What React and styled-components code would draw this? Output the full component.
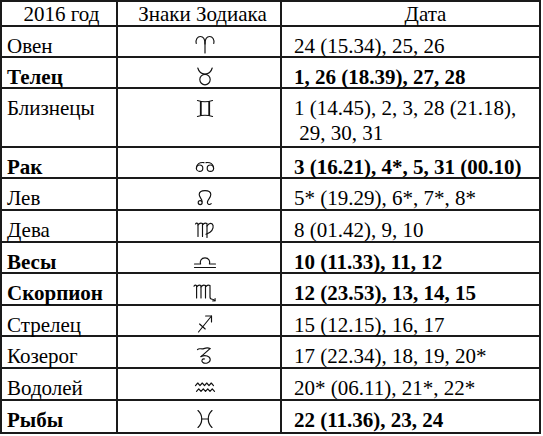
import React from "react";
import styled, { createGlobalStyle } from "styled-components";

const GlobalStyle = createGlobalStyle`
  html, body {
    margin: 0;
    padding: 0;
    background: #fff;
  }
  body {
    font-family: "Liberation Serif", "Times New Roman", serif;
    color: #000;
  }
`;

const Table = styled.table`
  width: 541px;
  table-layout: fixed;
  border-collapse: collapse;
  border: 2px solid #1a1a1a;
  font-size: 21px;
  line-height: 20px;
`;

const Row = styled.tr`
  height: ${(p) => p.$h}px;
`;

const Cell = styled.td`
  border: 2px solid #1a1a1a;
  vertical-align: top;
  padding: ${(p) => (p.$head ? "2px" : "9px")} 0 0 0;
  font-weight: ${(p) => (p.$bold ? 700 : 400)};
  white-space: nowrap;
`;

const NameCell = styled(Cell)`
  padding-left: 5px;
`;

const SignCell = styled(Cell)`
  text-align: center;
  padding-left: ${(p) => (p.$head ? "7px" : "11px")};
  padding-top: ${(p) => (p.$head ? "2px" : "8px")};
`;

const DateCell = styled(Cell)`
  padding-left: ${(p) => (p.$head ? "30px" : "12px")};
  text-align: ${(p) => (p.$head ? "center" : "left")};
`;

const DateLine = styled.div`
  & + & {
    margin-top: 5px;
  }
`;

const Glyph = styled.svg`
  display: block;
  margin: 0 auto;
  width: 24px;
  height: 20px;
  overflow: visible;
  fill: none;
  stroke: #111;
  stroke-width: 1.15;
  stroke-linecap: round;
  stroke-linejoin: round;
`;

const signs = {
  aries: (
    <>
      <path d="M3.2 8.5 C2.4 4.5 4.5 1.5 7.3 1.5 C10.5 1.5 12 5 12 9 V18" />
      <path d="M20.8 8.5 C21.6 4.5 19.5 1.5 16.7 1.5 C13.5 1.5 12 5 12 9" />
    </>
  ),
  taurus: (
    <>
      <path d="M4.8 2 C5.8 5.5 8.2 8 12 8 C15.8 8 18.2 5.5 19.2 2" />
      <circle cx="12" cy="13.6" r="5.2" />
    </>
  ),
  gemini: (
    <>
      <path d="M4.5 3.5 Q12 6 19.5 3.5" />
      <path d="M4.5 19.5 Q12 17 19.5 19.5" />
      <path d="M7.8 5 V18 M16.2 5 V18" strokeWidth="1.8" />
    </>
  ),
  cancer: (
    <>
      <circle cx="6.6" cy="12.2" r="3.2" />
      <path d="M3.4 12.2 C3.4 8 6.6 6 11 6.6" />
      <circle cx="17.4" cy="12.2" r="3.2" />
      <path d="M20.6 12.2 C20.6 8 17.4 6 13 6.6" />
    </>
  ),
  leo: (
    <>
      <circle cx="7.2" cy="15.6" r="2" />
      <path d="M8.9 14.6 C9.6 12 6.2 10.5 6.2 7.6 C6.2 5 8.6 3.6 12 3.6 C15.4 3.6 17.8 5 17.8 7.6 C17.8 11 14.4 12.6 14.4 15.5 C14.4 17.6 16.8 18.1 18.2 16.6" />
    </>
  ),
  virgo: (
    <>
      <path d="M2.5 5 Q3.6 3.4 5 4.6 V17.5" />
      <path d="M5 6 Q7 3 9.5 4.6 V17.5" />
      <path d="M9.5 6 Q11.5 3 14 4.6 V18.5" />
      <path d="M14 7 Q16.5 3.4 19 4.8 C21.2 6.6 20.2 11 17 13.2 C16 13.9 14.6 14.6 13 15.2" />
    </>
  ),
  libra: (
    <>
      <path d="M1.5 16.5 H22.5" />
      <path d="M1.5 13 H7.6 C6.6 10.6 8 6.8 12 6.8 C16 6.8 17.4 10.6 16.4 13 H22.5" />
    </>
  ),
  scorpio: (
    <>
      <path d="M1 4.2 Q2.2 2.6 3.6 3.6 V16" />
      <path d="M3.6 5 Q5.6 2 8 3.6 V16" />
      <path d="M8 5 Q10 2 12.5 3.6 V16" />
      <path d="M12.5 5 Q14.5 2 17 3.6 V15 Q17 17.2 19.2 17.2 Q21 17.2 22 18.8" />
      <path d="M19.8 18.9 L22 18.8 L22.1 16.6" />
    </>
  ),
  sagittarius: (
    <>
      <path d="M5.5 18 L18.5 2" />
      <path d="M12.6 2 H18.5 V7.9" />
      <path d="M6.6 10 L12.2 15" />
    </>
  ),
  capricorn: (
    <>
      <path d="M4.5 4.6 C6 2.6 8.2 4.6 10.8 3.6 C13 2.8 15.4 2.6 17 3.6" />
      <path d="M17 3.6 L8 11.6" />
      <path d="M8 11.6 C12 9.6 17.2 11 17.2 14.6 C17.2 18.2 12 19.2 9.6 17.2 C8.1 15.8 9 13.6 11.6 14" />
    </>
  ),
  aquarius: (
    <>
      <path d="M2.5 8.6 L4.75 6 L7 8.6 L9.25 6 L11.5 8.6 L13.75 6 L16 8.6 L18.25 6 L20.5 8.6" />
      <path d="M3.5 14.4 L5.75 11.8 L8 14.4 L10.25 11.8 L12.5 14.4 L14.75 11.8 L17 14.4 L19.25 11.8 L21.5 14.4" />
    </>
  ),
  pisces: (
    <>
      <path d="M5 1.5 C10 6 10 14 5 18.5" />
      <path d="M19 1.5 C14 6 14 14 19 18.5" />
      <path d="M8.6 10 H15.4" />
    </>
  ),
};

const rows = [
  { name: "Овен", sign: "aries", date: "24 (15.34), 25, 26", h: 31 },
  { name: "Телец", sign: "taurus", date: "1, 26 (18.39), 27, 28", bold: true, h: 31 },
  {
    name: "Близнецы",
    sign: "gemini",
    date: ["1 (14.45), 2, 3, 28 (21.18),", "\u00a029, 30, 31"],
    h: 59,
  },
  { name: "Рак", sign: "cancer", date: "3 (16.21), 4*, 5, 31 (00.10)", bold: true, h: 31 },
  { name: "Лев", sign: "leo", date: "5* (19.29), 6*, 7*, 8*", h: 32 },
  { name: "Дева", sign: "virgo", date: "8 (01.42), 9, 10", h: 32 },
  { name: "Весы", sign: "libra", date: "10 (11.33), 11, 12", bold: true, h: 31 },
  { name: "Скорпион", sign: "scorpio", date: "12 (23.53), 13, 14, 15", bold: true, h: 32 },
  { name: "Стрелец", sign: "sagittarius", date: "15 (12.15), 16, 17", h: 31 },
  { name: "Козерог", sign: "capricorn", date: "17 (22.34), 18, 19, 20*", h: 32 },
  { name: "Водолей", sign: "aquarius", date: "20* (06.11), 21*, 22*", h: 32 },
  { name: "Рыбы", sign: "pisces", date: "22 (11.36), 23, 24", bold: true, h: 33 },
];

export default function App() {
  return (
    <>
      <GlobalStyle />
      <Table>
        <colgroup>
          <col style={{ width: 116 }} />
          <col style={{ width: 164 }} />
          <col />
        </colgroup>
        <thead>
          <Row $h={25}>
            <NameCell as="th" $head>2016 год</NameCell>
            <SignCell as="th" $head>Знаки Зодиака</SignCell>
            <DateCell as="th" $head>Дата</DateCell>
          </Row>
        </thead>
        <tbody>
          {rows.map((r) => (
            <Row key={r.name} $h={r.h}>
              <NameCell $bold={r.bold}>{r.name}</NameCell>
              <SignCell>
                <Glyph viewBox="0 0 24 20">{signs[r.sign]}</Glyph>
              </SignCell>
              <DateCell $bold={r.bold}>
                {Array.isArray(r.date)
                  ? r.date.map((line, i) => <DateLine key={i}>{line}</DateLine>)
                  : r.date}
              </DateCell>
            </Row>
          ))}
        </tbody>
      </Table>
    </>
  );
}
